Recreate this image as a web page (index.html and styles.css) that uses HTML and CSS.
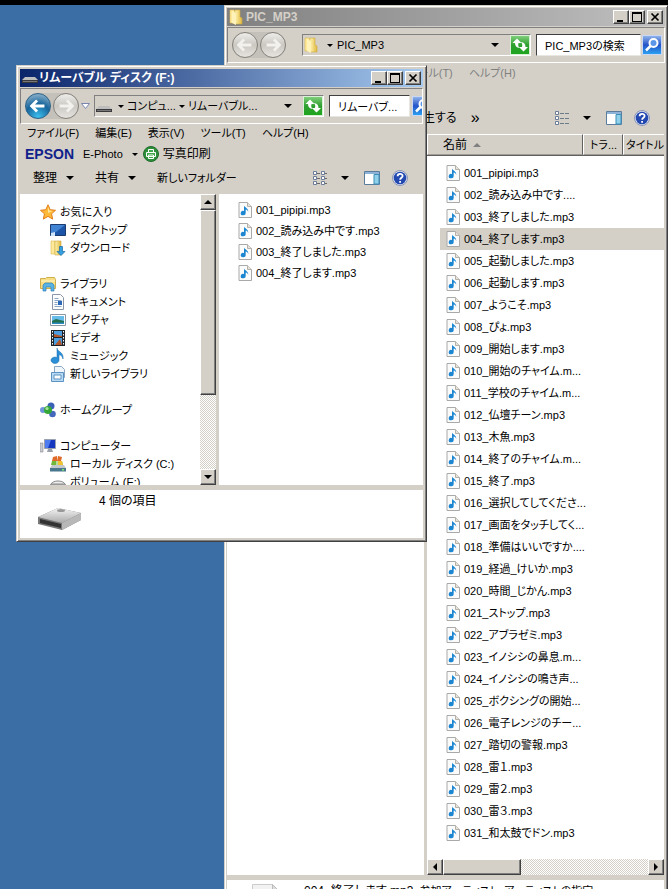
FILE: index.html
```
<!DOCTYPE html>
<html lang="ja">
<head>
<meta charset="utf-8">
<title>PIC_MP3</title>
<link rel="stylesheet" href="styles.css">
</head>
<body>
<svg class="defs" aria-hidden="true">
  <defs>
    <linearGradient id="gold" x1="0" x2="1"><stop offset="0" stop-color="#fff3b0"/><stop offset="1" stop-color="#e0b840"/></linearGradient>
    <linearGradient id="green" x1="0" y1="0" x2="0" y2="1"><stop offset="0" stop-color="#7fcf7a"/><stop offset=".5" stop-color="#2f9f30"/><stop offset="1" stop-color="#1ea51e"/></linearGradient>
    <linearGradient id="azure" x1="0" y1="0" x2="0" y2="1"><stop offset="0" stop-color="#8fb2ea"/><stop offset=".5" stop-color="#2454c8"/><stop offset="1" stop-color="#2ba0f0"/></linearGradient>
    <linearGradient id="metal" x1="0" y1="0" x2="0" y2="1"><stop offset="0" stop-color="#f4f4f4"/><stop offset="1" stop-color="#aaa"/></linearGradient>
    <symbol id="mp3" viewBox="0 0 14 16"><path d="M1 .5h8.500l4 4V15.500H1z" fill="#fbfbfb" stroke="#a9a9a9"/><path d="M9.500.500v4h4" fill="#e8e4dc" stroke="#b5b0a8"/><path d="M6 3.500c.4 2 4.600 2.400 4.300 6.500-.6-1.600-1.200-2.200-2.600-2.400V11a2.500 2.200 0 1 1-1.700-2z" fill="#1d86d0"/></symbol>
    <symbol id="folder" viewBox="0 0 14 16"><path d="M1 1h4l1 1v12H1z" fill="#ffe99a" stroke="#d8b850" stroke-width=".6"/><path d="M6 1h5v7l2 1v6H6z" fill="url(#gold)" stroke="#cfa93c" stroke-width=".6"/><path d="M3 2l4 2v12l-4-2z" fill="#fff2b8"/></symbol>
    <symbol id="drive" viewBox="0 0 16 8"><path d="M3 1h10l3 3H0z" fill="#bdbdbd"/><path d="M0 4h16v3H0z" fill="#3a3a3c"/><path d="M1 5.500h14" stroke="#777"/></symbol>
    <symbol id="star" viewBox="0 0 16 16"><path d="M8 .8l2.200 4.900 5.300.6-4 3.500 1.200 5.300L8 12.400l-4.700 2.700 1.200-5.300-4-3.500 5.300-.6z" fill="#ffb938" stroke="#e07c16"/><path d="M8 3l1.300 3.500 3.200.4-4.500 2z" fill="#ffe79a"/></symbol>
    <symbol id="desk" viewBox="0 0 16 16"><path d="M.5 2.500h15v11H.5z" fill="#1c55a8" stroke="#1c3c70"/><path d="M1 3h14L6 10 1 12z" fill="#3f83d2"/><path d="M1 11l4-1v4H1z" fill="#cde4fa"/></symbol>
    <symbol id="down" viewBox="0 0 16 16"><path d="M1 1h4v13H1z" fill="#ffe99a" stroke="#d8b850" stroke-width=".6"/><path d="M5 1h6v14H5z" fill="url(#gold)" stroke="#cfa93c" stroke-width=".6"/><path d="M9.500 6.500h3v5H15l-4 4-4-4h2.500z" fill="#35a0e0" stroke="#1668a8" stroke-width=".7"/></symbol>
    <symbol id="lib" viewBox="0 0 16 16"><path d="M.5 2.500h5l1-1h8l1 2v9H.5z" fill="#f7dd84" stroke="#cfae4c"/><path d="M1 5h14" stroke="#fff5c8"/><path d="M3 15V9l2-2h7l2 2v6h-3v-4H6v4z" fill="#5ab3e4" stroke="#2b7fb8" stroke-width=".7"/></symbol>
    <symbol id="doc" viewBox="0 0 16 16"><path d="M2.500.500h8l3 3v12h-11z" fill="#fdfdfd" stroke="#8a97a8"/><path d="M4.500 4.500h4M4.500 6.500h7M4.500 8.500h3M4.500 10.500h3M4.500 12.500h7" stroke="#8ba6c6"/><path d="M8 7h4v4H8z" fill="#2c68b8"/></symbol>
    <symbol id="pic" viewBox="0 0 16 16"><path d="M.5 2.500h15v11H.5z" fill="#fff" stroke="#8b98a4"/><path d="M2 4h12v8H2z" fill="#66bce8"/><path d="M2 9l4-2 8 2v3H2z" fill="#23704e"/><path d="M2 10.500h12V12H2z" fill="#2a8bc0"/></symbol>
    <symbol id="vid" viewBox="0 0 16 16"><path d="M1 0h14v16H1z" fill="#20252c"/><path d="M4 1h8v6H4zM4 8h8v7H4z" fill="#4c9de0"/><path d="M4 4l8 2v1H4zM5 15l5-6 2 6z" fill="#b2552a"/><path d="M2.500 1v14M13.500 1v14" stroke="#fff" stroke-dasharray="1.500 1.500"/></symbol>
    <symbol id="note" viewBox="0 0 16 16"><path d="M7 0c.5 4 7 4 6 11-1-3.500-2.500-4-4-4.200V12a4 3.200 0 1 1-2-2.500z" fill="#2b8fd8" stroke="#1668a8" stroke-width=".5"/></symbol>
    <symbol id="newlib" viewBox="0 0 16 16"><path d="M4.500.500h7l3 3v8h-10z" fill="#eef5fb" stroke="#8ba6c0"/><path d="M1.500 6.500h12v9h-12z" fill="#b9d9f2" stroke="#5b93c4"/><path d="M4 9h7v4H4z" fill="#fff" stroke="#5b93c4"/></symbol>
    <symbol id="group" viewBox="0 0 16 16"><circle cx="11" cy="4" r="3.500" fill="#3c62b8"/><circle cx="3" cy="8" r="3" fill="#6f95d8"/><circle cx="12.500" cy="12" r="3.300" fill="#4468bd"/><circle cx="8" cy="8" r="4" fill="#35a838"/><circle cx="7" cy="6.500" r="1.600" fill="#a8e49a"/></symbol>
    <symbol id="pc" viewBox="0 0 16 16"><path d="M0 5h3v9H0z" fill="#c8ccd4" stroke="#888" stroke-width=".6"/><path d="M4.500 1.500h11v9h-11z" fill="#1638c0" stroke="#9aa2b0"/><path d="M5 2h6l-3 8H5z" fill="#4c7cf0"/><path d="M8 11h4l1 3H7z" fill="#9aa0aa"/></symbol>
    <symbol id="cdrive" viewBox="0 0 16 16"><path d="M3 1l4-1v5H2zM8 0l4 1-1 4H7z" fill="#e06a28"/><path d="M2 5h4.500v4H1zM7.500 5H12l1 4H7.500z" fill="#6fb83a"/><path d="M8 5h4l1 4H8z" fill="#f2c230"/><path d="M2 9h12l2 3H0z" fill="#c4c8cc"/><path d="M0 12h16v3.500H0z" fill="#49778e"/><path d="M12 13h2v1.500h-2z" fill="#7dea6a"/></symbol>
    <symbol id="disk" viewBox="0 0 16 16"><path d="M1 10c2-4 12-4 14 0z" fill="#eee" stroke="#888"/><path d="M0 10h16v3H0z" fill="#999"/></symbol>
    <symbol id="panel" viewBox="0 0 16 14"><path d="M.5.500h15v13H.5z" fill="#fff" stroke="#5c7c9c"/><path d="M1 1h14v2H1z" fill="#8db4d8"/><path d="M10 3.500h5V13h-5z" fill="#8fd0ea" stroke="#3c8eb8"/></symbol>
    <symbol id="help" viewBox="0 0 16 16"><circle cx="8" cy="8" r="7.500" fill="#dfe4f0" stroke="#8a94b4"/><circle cx="8" cy="8" r="6.300" fill="#2348b0"/><path d="M5.600 6.200c0-3.200 5-3.100 5-.2 0 1.800-2.500 1.800-2.500 3.800M8.100 11v1.800" fill="none" stroke="#fff" stroke-width="1.800"/></symbol>
    <symbol id="icons" viewBox="0 0 16 14"><g fill="#fff" stroke="#6a7c98"><path d="M1.500.500h3v3h-3zM1.500 5.500h3v3h-3zM1.500 10.500h3v3h-3zM9.500.500h3v3h-3zM9.500 5.500h3v3h-3zM9.500 10.500h3v3h-3z"/></g><path d="M5 2.500h3M5 7.500h3M5 12.500h3M13 2.500h2M13 7.500h2M13 12.500h2" stroke="#6a6a6a"/></symbol>
    <symbol id="details" viewBox="0 0 16 14"><g fill="#fff" stroke="#6a7c98"><path d="M1.500.500h3v3h-3zM1.500 5.500h3v3h-3zM1.500 10.500h3v3h-3z"/></g><path d="M6 2.500h4M11 2.500h4M6 7.500h4M11 7.500h4M6 12.500h4M11 12.500h4" stroke="#6a7c88"/></symbol>
    <symbol id="refresh" viewBox="0 0 20 20"><path d="M0 0h20v20H0z" fill="#d9efd6"/><path d="M1 1h18v18H1z" fill="url(#green)"/><path d="M7 3.500L2.500 8H5c0 3 1.500 4.500 4.500 5C8.200 11.500 8 10 8.500 8h3zM13.500 16.500L18 12h-2.500c0-3-1.500-4.500-4.500-5 1.300 1.500 1.500 3 1 5H9z" fill="#fff"/></symbol>
    <symbol id="find" viewBox="0 0 20 20"><path d="M0 0h20v20H0z" fill="#c8d8f4"/><path d="M1 1h18v18H1z" fill="url(#azure)"/><circle cx="11.500" cy="8" r="4" fill="#5c96e8" stroke="#fff" stroke-width="2"/><path d="M8.500 11L4 15.500" stroke="#fff" stroke-width="2.500"/></symbol>
    <symbol id="back" viewBox="0 0 26 26"><path d="M12 7l-6 6 6 6M6.500 13H20" fill="none" stroke-width="3"/></symbol>
    <symbol id="min" viewBox="0 0 12 10"><path d="M2 8h6v2H2z"/></symbol>
    <symbol id="max" viewBox="0 0 12 10"><path d="M1 0h10v10H1zM2 2v7h8V2z" fill-rule="evenodd"/></symbol>
    <symbol id="close" viewBox="0 0 12 10"><path d="M2.500 1.500l7 7M9.500 1.500l-7 7" stroke="#000" stroke-width="1.700"/></symbol>
  </defs>
</svg>

<main class="desktop">
  <section class="window rear">
    <header class="title">
      <svg class="i14"><use href="#folder"/></svg>
      <h1>PIC_MP3</h1>
      <button class="cap" aria-label="最小化"><svg><use href="#min"/></svg></button>
      <button class="cap" aria-label="最大化"><svg><use href="#max"/></svg></button>
      <button class="cap last" aria-label="閉じる"><svg><use href="#close"/></svg></button>
    </header>
    <nav class="nav">
      <div class="orbs">
        <button class="orb" aria-label="戻る"><svg><use href="#back"/></svg></button>
        <button class="orb fwd" aria-label="進む"><svg><use href="#back"/></svg></button>
      </div>
      <div class="address">
        <svg class="i14"><use href="#folder"/></svg>
        <span class="crumb"><i class="tri small"></i>PIC_MP3</span>
        <button class="plain" aria-label="履歴"><i class="tri"></i></button>
        <button class="square" aria-label="更新"><svg><use href="#refresh"/></svg></button>
      </div>
      <input class="search" type="text" value="PIC_MP3の検索" aria-label="検索語">
      <button class="square" aria-label="検索"><svg><use href="#find"/></svg></button>
    </nav>
    <div class="menu dim">
      <button>ファイル(F)</button><button>編集(E)</button><button>表示(V)</button><button>ツール(T)</button><button>ヘルプ(H)</button>
    </div>
    <div class="band"></div>
    <div class="tools">
      <button class="play">再生する</button><button class="more">»</button>
      <span class="grow"></span>
      <button aria-label="表示方法"><svg class="i16"><use href="#details"/></svg><i class="tri"></i></button>
      <button class="pane" aria-label="プレビュー"><svg class="i16"><use href="#panel"/></svg></button>
      <button aria-label="ヘルプ"><svg class="i16"><use href="#help"/></svg></button>
    </div>
    <div class="body">
      <div class="blank"></div>
      <div class="listing">
        <div class="heads">
          <button class="name">名前<i class="up"></i></button><button class="track">トラ...</button><button class="ttl">タイトル</button>
        </div>
        <ul class="files">
          <li><svg><use href="#mp3"/></svg>001_pipipi.mp3</li>
          <li><svg><use href="#mp3"/></svg>002_読み込み中です....</li>
          <li><svg><use href="#mp3"/></svg>003_終了しました.mp3</li>
          <li class="on"><svg><use href="#mp3"/></svg>004_終了します.mp3</li>
          <li><svg><use href="#mp3"/></svg>005_起動しました.mp3</li>
          <li><svg><use href="#mp3"/></svg>006_起動します.mp3</li>
          <li><svg><use href="#mp3"/></svg>007_ようこそ.mp3</li>
          <li><svg><use href="#mp3"/></svg>008_ぴょ.mp3</li>
          <li><svg><use href="#mp3"/></svg>009_開始します.mp3</li>
          <li><svg><use href="#mp3"/></svg>010_開始のチャイム.m...</li>
          <li><svg><use href="#mp3"/></svg>011_学校のチャイム.m...</li>
          <li><svg><use href="#mp3"/></svg>012_仏壇チーン.mp3</li>
          <li><svg><use href="#mp3"/></svg>013_木魚.mp3</li>
          <li><svg><use href="#mp3"/></svg>014_終了のチャイム.m...</li>
          <li><svg><use href="#mp3"/></svg>015_終了.mp3</li>
          <li><svg><use href="#mp3"/></svg>016_選択してしてくださ...</li>
          <li><svg><use href="#mp3"/></svg>017_画面をタッチしてく...</li>
          <li><svg><use href="#mp3"/></svg>018_準備はいいですか....</li>
          <li><svg><use href="#mp3"/></svg>019_経過_けいか.mp3</li>
          <li><svg><use href="#mp3"/></svg>020_時間_じかん.mp3</li>
          <li><svg><use href="#mp3"/></svg>021_ストップ.mp3</li>
          <li><svg><use href="#mp3"/></svg>022_アブラゼミ.mp3</li>
          <li><svg><use href="#mp3"/></svg>023_イノシシの鼻息.m...</li>
          <li><svg><use href="#mp3"/></svg>024_イノシシの鳴き声...</li>
          <li><svg><use href="#mp3"/></svg>025_ボクシングの開始...</li>
          <li><svg><use href="#mp3"/></svg>026_電子レンジのチー...</li>
          <li><svg><use href="#mp3"/></svg>027_踏切の警報.mp3</li>
          <li><svg><use href="#mp3"/></svg>028_雷１.mp3</li>
          <li><svg><use href="#mp3"/></svg>029_雷２.mp3</li>
          <li><svg><use href="#mp3"/></svg>030_雷３.mp3</li>
          <li><svg><use href="#mp3"/></svg>031_和太鼓でドン.mp3</li>
        </ul>
        <div class="hbar">
          <button aria-label="左へ"><i class="tri left"></i></button><div class="thumb"></div><span class="grow"></span><button aria-label="右へ"><i class="tri right"></i></button>
        </div>
      </div>
    </div>
    <footer class="info">
      <svg class="page" viewBox="0 0 30 36"><path d="M.5.500h20l8 8v28H.5z" fill="#f2f2f2" stroke="#ccc"/><path d="M20.500.500v8h8z" fill="#ddd" stroke="#bbb"/></svg>
      <span class="picked">004_終了します.mp3</span><span>参加アーティスト: アーティストの指定</span>
    </footer>
  </section>

  <section class="window front">
    <header class="title">
      <svg class="i16"><use href="#drive"/></svg>
      <h2>リムーバブル ディスク (F:)</h2>
      <button class="cap" aria-label="最小化"><svg><use href="#min"/></svg></button>
      <button class="cap" aria-label="最大化"><svg><use href="#max"/></svg></button>
      <button class="cap last" aria-label="閉じる"><svg><use href="#close"/></svg></button>
    </header>
    <nav class="nav">
      <div class="orbs">
        <button class="orb live" aria-label="戻る"><svg><use href="#back"/></svg></button>
        <button class="orb fwd" aria-label="進む"><svg><use href="#back"/></svg></button>
      </div>
      <svg class="chev" viewBox="0 0 9 6"><path d="M.5.500h8l-4 5z" fill="#fff" stroke="#7a86b0"/></svg>
      <div class="address">
        <svg class="i16"><use href="#drive"/></svg>
        <span class="crumb"><i class="tri small"></i>コンピュ...</span><span class="crumb"><i class="tri small"></i>リムーバブル...</span>
        <button class="plain" aria-label="履歴"><i class="tri"></i></button>
        <button class="square" aria-label="更新"><svg><use href="#refresh"/></svg></button>
      </div>
      <input class="search" type="text" value="リムーバブ..." aria-label="検索語">
      <button class="square" aria-label="検索"><svg><use href="#find"/></svg></button>
    </nav>
    <div class="menu">
      <button>ファイル(F)</button><button>編集(E)</button><button>表示(V)</button><button>ツール(T)</button><button>ヘルプ(H)</button>
    </div>
    <div class="band">
      <b class="epson">EPSON</b>
      <button class="photo">E-Photo<i class="tri small"></i></button>
      <button class="print"><svg class="i16" viewBox="0 0 16 16"><circle cx="8" cy="8" r="7.500" fill="#2d8f3a" stroke="#1f6c2a"/><path d="M5.500 3.500h5v3h-5zM3.500 6.500h9v4h-9zM5.500 9h5v3.500h-5z" fill="#3fa64c" stroke="#fff"/></svg>写真印刷</button>
    </div>
    <div class="tools">
      <button class="gap">整理<i class="tri"></i></button><button class="gap">共有<i class="tri"></i></button><button class="kana">新しいフォルダー</button>
      <span class="grow"></span>
      <button aria-label="表示方法"><svg class="i16"><use href="#icons"/></svg><i class="tri"></i></button>
      <button class="pane" aria-label="プレビュー"><svg class="i16"><use href="#panel"/></svg></button>
      <button aria-label="ヘルプ"><svg class="i16"><use href="#help"/></svg></button>
    </div>
    <div class="body">
      <ul class="tree">
        <li><svg><use href="#star"/></svg>お気に入り</li>
        <li class="sub"><svg><use href="#desk"/></svg>デスクトップ</li>
        <li class="sub"><svg><use href="#down"/></svg>ダウンロード</li>
        <li class="top"><svg><use href="#lib"/></svg>ライブラリ</li>
        <li class="sub"><svg><use href="#doc"/></svg>ドキュメント</li>
        <li class="sub"><svg><use href="#pic"/></svg>ピクチャ</li>
        <li class="sub"><svg><use href="#vid"/></svg>ビデオ</li>
        <li class="sub"><svg><use href="#note"/></svg>ミュージック</li>
        <li class="sub"><svg><use href="#newlib"/></svg>新しいライブラリ</li>
        <li class="top"><svg><use href="#group"/></svg>ホームグループ</li>
        <li class="top"><svg><use href="#pc"/></svg>コンピューター</li>
        <li class="sub"><svg><use href="#cdrive"/></svg>ローカル ディスク (C:)</li>
        <li class="sub"><svg><use href="#disk"/></svg>ボリューム (E:)</li>
      </ul>
      <div class="vbar">
        <button aria-label="上へ"><i class="tri rise"></i></button><div class="thumb"></div><span class="grow"></span><button aria-label="下へ"><i class="tri"></i></button>
      </div>
      <ul class="files">
        <li><svg><use href="#mp3"/></svg>001_pipipi.mp3</li>
        <li><svg><use href="#mp3"/></svg>002_読み込み中です.mp3</li>
        <li><svg><use href="#mp3"/></svg>003_終了しました.mp3</li>
        <li><svg><use href="#mp3"/></svg>004_終了します.mp3</li>
      </ul>
    </div>
    <footer class="info">
      <svg class="hdd" viewBox="0 0 44 24"><path d="M0 10L20 1l23 5v7L24 23 0 17z" fill="#777"/><path d="M0 10L20 1l23 5-19 10z" fill="url(#metal)"/><path d="M2 12l21 5v4L2 16z" fill="#333"/><path d="M24 16l19-10v7L24 23z" fill="#b8b8b8"/><ellipse cx="23" cy="3.500" rx="4" ry="1.500" fill="#999"/></svg>
      <span>4 個の項目</span>
    </footer>
  </section>
</main>
</body>
</html>
```
FILE: styles.css
```
* { box-sizing: border-box; }
body {
  margin: 0;
  background: #3a6ea5;
  color: #000;
  font: 11px/18px "Liberation Sans", "Noto Sans CJK JP", sans-serif;
  font-feature-settings: "palt";
}
button, input { font: inherit; font-feature-settings: inherit; color: inherit; padding: 0; margin: 0; border: 0; background: none; white-space: nowrap; }
ul { list-style: none; margin: 0; padding: 0; }
svg { display: block; flex: none; }
.defs { position: absolute; width: 0; height: 0; }
.desktop { position: relative; min-height: 100vh; border-top: 5px solid #000; overflow: hidden; }
.grow { flex: 1; }
.i14 { width: 14px; height: 16px; }
.i16 { width: 16px; height: 16px; }

/* windows */
.window {
  position: absolute;
  display: flex;
  flex-direction: column;
  background: #d4d0c8;
  border: 1px solid #d4d0c8;
  border-right-color: #404040;
  border-bottom-color: #404040;
  box-shadow: inset 1px 1px #fff, inset -1px -1px #808080;
  padding: 3px;
}
.rear { left: 224px; right: 0; top: 0; bottom: -50px; padding: 2px; }
.front { left: 16px; top: 60px; width: 411px; height: 477px; }

.title { display: flex; align-items: center; height: 18px; padding: 0 2px; color: #fff; background: linear-gradient(90deg, #0a246a, #a6caf0); }
.rear .title { color: #d4d0c8; background: linear-gradient(90deg, #808080, #c0c0c0); }
.title h1, .title h2 { flex: 1; margin: 0 0 0 3px; font-size: 12px; line-height: 18px; font-weight: 700; white-space: nowrap; }
.front .title h2 { margin-left: 1px; }
.title .i16 { height: 8px; margin-top: 4px; }
.cap { width: 16px; height: 14px; background: #d4d0c8; border: 1px solid; border-color: #fff #404040 #404040 #fff; box-shadow: inset -1px -1px #808080; display: flex; align-items: center; justify-content: center; }
.cap svg { width: 12px; height: 10px; }
.cap.last { margin-left: 2px; }

.nav { display: flex; align-items: center; height: 36px; margin-top: 1px; padding: 0 2px 0 4px; border: 1px solid; border-color: #808080 #fff #fff #808080; overflow: hidden; flex: none; }
.orbs { display: flex; border-radius: 13px; background: #c4c1ba; margin-right: 3px; }
.orb { width: 26px; height: 26px; border-radius: 13px; border: 1px solid #85827c; background: linear-gradient(#eeedea, #cbc8c2 50%, #e6e4e0); }
.orb + .orb { margin-left: 2px; }
.orb svg { width: 24px; height: 24px; stroke: #f2f1ee; }
.orb.live { border-color: #2b6188; background: radial-gradient(circle at 50% 95%, #3cc0f0, #17659c 50%, #a8c4d6); }
.orb.live svg { stroke: #fff; }
.orb.fwd svg { transform: scaleX(-1); }
.chev { width: 9px; height: 6px; margin: 0 4px 0 -1px; }
.address { flex: 1; min-width: 0; display: flex; align-items: center; height: 22px; border: 1px solid; border-color: #808080 #fff #fff #808080; padding-left: 1px; }
.rear .address { margin-left: 13px; }
.address .i16 { height: 8px; margin: 5px 3px 0 0; }
.crumb { display: flex; align-items: center; white-space: nowrap; font-size: 11px; }
.crumb .tri { margin: 0 3px; }
.rear .crumb .tri { margin: 0 4px 0 9px; }
.plain { margin-left: auto; width: 24px; display: flex; justify-content: center; }
.square { width: 20px; height: 20px; flex: none; }
.square svg { width: 20px; height: 20px; }
.plain + .square { margin-left: 3px; }
.search { width: 105px; height: 22px; margin: 0 1px 0 5px; padding: 0 8px; background: #fff; border: 1px solid; border-color: #404040 #e8e6e0 #e8e6e0 #404040; flex: none; }
.front .search { width: 81px; margin-right: 2px; }
.front .nav .search + .square { margin-right: -12px; }

.tri { display: block; width: 0; height: 0; border: 4px solid transparent; border-top-color: #000; border-bottom: 0; flex: none; }
.tri.small { border-width: 3px 3px 0; }
.tri.rise { border: 4px solid transparent; border-bottom-color: #000; border-top: 0; }
.tri.left { border: 4px solid transparent; border-right-color: #000; border-left: 0; }
.tri.right { border: 4px solid transparent; border-left-color: #000; border-right: 0; }

.menu { display: flex; gap: 16px; height: 18px; padding-left: 7px; flex: none; }
.menu.dim { color: #808080; margin-top: 1px; }
.band { display: flex; align-items: center; height: 24px; padding-left: 5px; flex: none; font-size: 12px; }
.band button { display: flex; align-items: center; gap: 4px; }
.band .photo { font-size: 11px; gap: 9px; }
.epson { font-size: 14px; color: #10218b; margin-right: 9px; }
.print { margin-left: 5px; }
.tools { display: flex; align-items: center; height: 28px; padding: 0 15px 4px 13px; flex: none; font-size: 12px; }
.tools button { display: flex; align-items: center; }
.tools .tri { margin-left: 13px; }
.tools .gap .tri { margin-left: 9px; }
.tools .gap { margin-right: 21px; }
.tools .grow ~ button + button { margin-left: 12px; }
.tools .grow ~ button.pane { margin-left: 15px; }
.tools .kana { font-size: 11px; }
.play { margin-left: 171px; }
.more { margin-left: 14px; font-size: 16px; }

.body { display: flex; flex: 1; min-height: 0; }
.files { flex: 1; background: #fff; padding: 5px 0 0 19px; overflow: hidden; }
.files li { display: flex; align-items: center; height: 21px; white-space: nowrap; }
.files svg { width: 14px; height: 16px; margin-right: 4px; }

/* rear window */
.blank { width: 197px; background: #fff; margin-right: 3px; }
.rear .body { flex: none; height: 741px; }
.listing { flex: 1; min-width: 0; display: flex; flex-direction: column; margin-right: 1px; }
.heads { display: flex; height: 22px; flex: none; overflow: hidden; border-bottom: 1px solid #606060; }
.heads button { display: flex; align-items: center; padding-left: 6px; border: 1px solid; border-color: #fff #606060 #a09c94 #fff; flex: none; overflow: hidden; }
.heads .name { flex: 1; padding-left: 15px; font-size: 12px; gap: 6px; }
.heads .track { width: 40px; }
.heads .ttl { padding-left: 2px; border-right: 0; }
.up { border: 4px solid transparent; border-bottom-color: #808080; border-top: 0; }
.rear .files { padding: 6px 0 0 13px; }
.rear .files li { height: 22px; padding-left: 6px; }
.rear .files .on { background: #d4d0c8; }
.hbar, .vbar { display: flex; flex: none; background: repeating-conic-gradient(#fff 0 25%, #d4d0c8 0 50%) 0 0 / 2px 2px; }
.hbar { height: 16px; }
.vbar { width: 16px; flex-direction: column; margin-right: 3px; }
.hbar button, .vbar button, .thumb { width: 16px; height: 16px; background: #d4d0c8; border: 1px solid; border-color: #fff #404040 #404040 #fff; box-shadow: inset -1px -1px #808080; display: flex; align-items: center; justify-content: center; }
.hbar .thumb { width: 78px; }
.vbar .thumb { height: 185px; }
.info { display: flex; background: #fff; margin-top: 5px; height: 48px; flex: none; white-space: nowrap; }
.rear .info { flex: 1; margin-right: 1px; }
.page { width: 30px; height: 36px; margin: 4px 22px 0 25px; }
.rear .info span { margin-top: 2px; }
.rear .info .picked { font-size: 12px; margin-right: 6px; }

/* front window */
.tree { width: 180px; background: #fff; padding: 9px 0 0 20px; overflow: hidden; }
.tree li { display: flex; align-items: center; gap: 4px; height: 18px; white-space: nowrap; }
.tree svg { width: 16px; height: 16px; }
.tree .sub { padding-left: 10px; }
.tree .top { margin-top: 18px; }
.hdd { width: 44px; height: 24px; margin: 17px 17px 0 18px; }
.front .info span { font-size: 12px; margin-top: 2px; }
```
